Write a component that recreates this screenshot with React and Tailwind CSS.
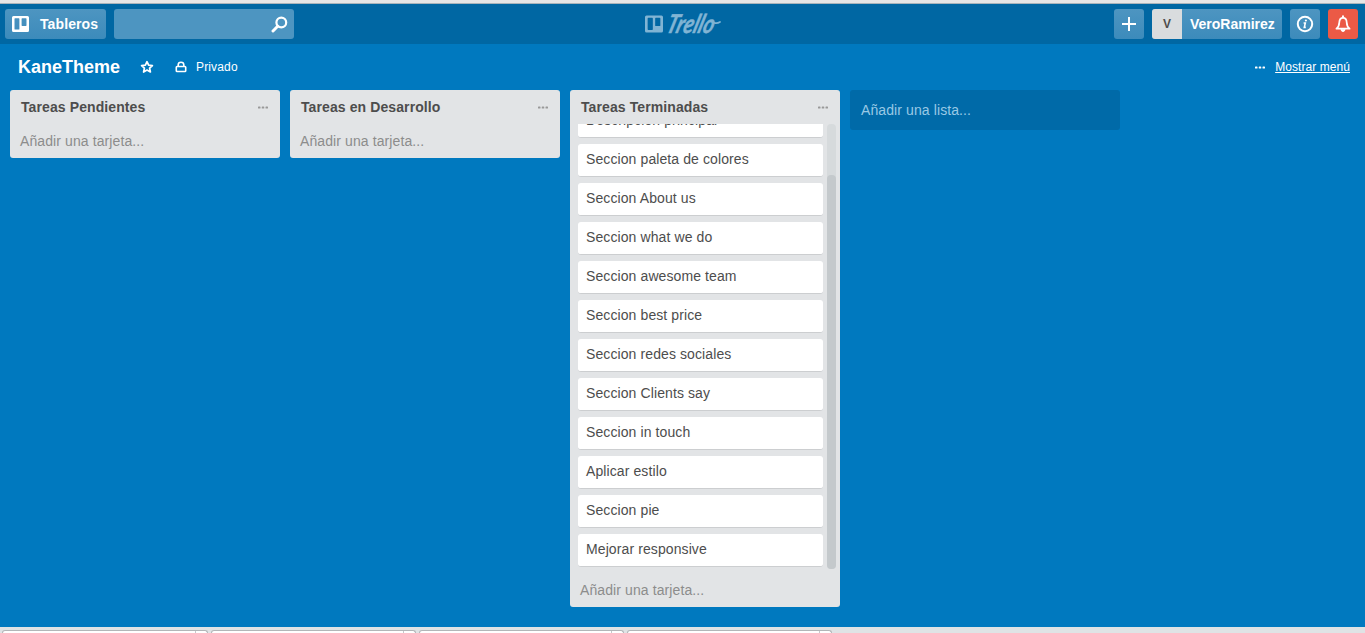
import React from "react";

const cards = [
  "Descripcion principal",
  "Seccion paleta de colores",
  "Seccion About us",
  "Seccion what we do",
  "Seccion awesome team",
  "Seccion best price",
  "Seccion redes sociales",
  "Seccion Clients say",
  "Seccion in touch",
  "Aplicar estilo",
  "Seccion pie",
  "Mejorar responsive",
];

const downloads = ["w-[192px]", "w-[191px]", "w-[191px]", "w-[191px]"];

function BoardIcon({ className }) {
  return (
    <svg viewBox="0 0 17 16" className={className} fill="currentColor">
      <path
        fillRule="evenodd"
        d="M1.500 0h14A1.500 1.500 0 0 1 17 1.500v13a1.500 1.500 0 0 1-1.500 1.500h-14A1.500 1.500 0 0 1 0 14.500v-13A1.500 1.500 0 0 1 1.500 0zM3.100 2.200a.6.6 0 0 0-.6.6v10.200a.6.6 0 0 0 .6.6h3.700a.6.6 0 0 0 .6-.6V2.800a.6.6 0 0 0-.6-.6zM10.200 2.200a.6.6 0 0 0-.6.6v6.500a.6.6 0 0 0 .6.6h3.700a.6.6 0 0 0 .6-.6V2.800a.6.6 0 0 0-.6-.6z"
      />
    </svg>
  );
}

function Dots({ className }) {
  return (
    <svg viewBox="0 0 10 3" className={className} fill="currentColor">
      <rect x="0" y="0.4" width="2.5" height="2.2" rx="0.6" />
      <rect x="3.75" y="0.4" width="2.5" height="2.2" rx="0.6" />
      <rect x="7.5" y="0.4" width="2.5" height="2.2" rx="0.6" />
    </svg>
  );
}

function ListHeader({ title }) {
  return (
    <div className="flex h-[34px] shrink-0 items-center justify-between pl-[11px] pr-3">
      <h2 className="text-sm font-bold tracking-[0.1px] text-[#4d4d4d]">{title}</h2>
      <Dots className="h-[3px] w-[10px] text-[#999]" />
    </div>
  );
}

function ShortList({ title }) {
  return (
    <section className="h-[68px] w-[270px] rounded-[3px] bg-[#e2e4e6]">
      <ListHeader title={title} />
      <p className="flex h-[34px] items-center pl-[10px] text-sm tracking-[0.1px] text-[#8c8c8c]">Añadir una tarjeta...</p>
    </section>
  );
}

export default function App() {
  return (
    <div className="flex h-[633px] w-[1365px] flex-col overflow-hidden bg-[#0079bf] font-['Liberation_Sans',Arial,sans-serif] text-sm text-white">
      <div className="h-1 shrink-0 border-b border-[#a9b4bb] bg-[#e6e6e6]" />
      <header className="grid h-10 shrink-0 grid-cols-[1fr_76px_1fr] items-center bg-[#0067a3] pl-[5px] pr-[7px]">
        <div className="flex gap-2">
          <button className="flex h-[30px] w-[101px] items-center rounded-[3px] bg-linear-to-b from-[#4d95c1] to-[#3c8bbb] pl-[7px] font-bold">
            <BoardIcon className="h-4 w-[17px]" />
            <span className="ml-[11px] tracking-[0.1px]">Tableros</span>
          </button>
          <div className="flex h-[30px] w-[180px] items-center justify-end rounded-[3px] bg-[#4d95c1] pr-[6px]">
            <svg viewBox="0 0 17 17" className="h-[17px] w-[17px]" fill="none" stroke="currentColor">
              <circle cx="10.3" cy="6.5" r="4.9" strokeWidth="2.2" />
              <path d="M6.7 10.3 2 15" strokeWidth="3" strokeLinecap="round" />
            </svg>
          </div>
        </div>
        <div className="flex items-center pl-px text-[#80b4d4]">
          <BoardIcon className="h-[18px] w-[18px] shrink-0" />
          <svg viewBox="0 0 58 28" className="h-7 w-[58px] shrink-0 overflow-visible" fill="currentColor">
            <text
              x="9"
              y="22.5"
              textLength="47"
              lengthAdjust="spacingAndGlyphs"
              transform="skewX(-17)"
              stroke="currentColor"
              strokeWidth="0.5"
              className="font-['Lato',sans-serif] text-[26px] font-bold italic"
            >
              Trello
            </text>
            <path d="M51.500 12.800q2.500 .8 5.500-.8" fill="none" stroke="currentColor" strokeWidth="1.8" strokeLinecap="round" />
          </svg>
        </div>
        <div className="flex justify-end gap-2">
          <button className="flex h-[30px] w-[30px] items-center justify-center rounded-[3px] bg-linear-to-b from-[#4d95c1] to-[#3c8bbb]">
            <svg viewBox="0 0 16 16" className="h-4 w-4" stroke="currentColor" strokeWidth="2">
              <path d="M8 1v14M1 8h14" />
            </svg>
          </button>
          <button className="flex h-[30px] w-[130px] items-center overflow-hidden rounded-[3px] bg-linear-to-b from-[#4d95c1] to-[#3c8bbb] font-bold">
            <span className="flex h-[30px] w-[30px] items-center justify-center bg-[#d9dcde] text-xs text-[#4d4d4d]">V</span>
            <span className="ml-2">VeroRamirez</span>
          </button>
          <button className="flex h-[30px] w-[30px] items-center justify-center rounded-[3px] bg-linear-to-b from-[#4d95c1] to-[#3c8bbb]">
            <svg viewBox="0 0 18 18" className="h-[18px] w-[18px]" fill="none" stroke="currentColor">
              <circle cx="9" cy="9" r="7.2" strokeWidth="2" />
              <path d="M7.6 8h1.7L8.300 12.400h1.500" strokeWidth="1.6" />
              <circle cx="9.9" cy="5.500" r="1.100" fill="currentColor" stroke="none" />
            </svg>
          </button>
          <button className="flex h-[30px] w-[30px] items-center justify-center rounded-[3px] bg-[#eb5a46]">
            <svg viewBox="0 0 16 18" className="h-[18px] w-4" fill="none" stroke="currentColor" strokeLinejoin="round" strokeLinecap="round">
              <path d="M8 2.800C5.300 2.800 4.400 5 4.300 7.400 4.200 10.300 3.300 12.300 1.400 13.700h13.200C12.700 12.300 11.800 10.300 11.700 7.400 11.600 5 10.700 2.800 8 2.800z" strokeWidth="1.7" />
              <path d="M8 1.200v1" strokeWidth="2" />
              <path d="M6 14.500a2 2 0 0 0 4 0z" fill="currentColor" strokeWidth="1" />
            </svg>
          </button>
        </div>
      </header>

      <div className="flex h-[46px] shrink-0 items-center pl-[18px] pr-[15px] text-xs">
        <h1 className="w-[102px] text-lg font-bold">KaneTheme</h1>
        <svg viewBox="0 0 14 14" className="ml-5 h-[14px] w-[14px]" fill="none" stroke="currentColor" strokeWidth="1.7" strokeLinejoin="round">
          <path d="m7 1.700 1.600 3.500 3.800.4-2.800 2.600.8 3.800L7 10.100 3.600 12l.8-3.800L1.600 5.600l3.800-.4z" />
        </svg>
        <svg viewBox="0 0 12 12" className="ml-[21px] h-3 w-3" fill="none" stroke="currentColor">
          <rect x="1.300" y="5.500" width="9.400" height="5" rx="0.8" strokeWidth="1.6" />
          <path d="M3.200 5.200V3.800a2.800 2.600 0 0 1 5.600 0v1.400" strokeWidth="1.6" />
        </svg>
        <span className="ml-[9px] tracking-[0.15px]">Privado</span>
        <Dots className="ml-auto h-[3px] w-[10px]" />
        <a href="#menu" className="ml-[10px] tracking-[0.07px] underline">Mostrar menú</a>
      </div>

      <main className="flex h-[537px] shrink-0 items-start gap-[10px] pl-[10px]">
        <ShortList title="Tareas Pendientes" />
        <ShortList title="Tareas en Desarrollo" />
        <section className="flex h-[517px] w-[270px] flex-col rounded-[3px] bg-[#e2e4e6]">
          <ListHeader title="Tareas Terminadas" />
          <div className="flex h-[445px] shrink-0 pl-2 pr-1">
            <div className="flex w-[245px] flex-col justify-end gap-[6px] overflow-hidden pb-[2px]">
              {cards.map((card) => (
                <div
                  key={card}
                  className="flex h-[33px] shrink-0 items-center rounded-[3px] border-b border-[#ccced0] bg-white pb-[2px] pl-2 tracking-[0.1px] text-[#4d4d4d]"
                >
                  {card}
                </div>
              ))}
            </div>
            <div className="ml-auto flex w-[9px] flex-col justify-end rounded bg-[#d6dadc]">
              <div className="h-[394px] rounded bg-[#c4c9cc]" />
            </div>
          </div>
          <p className="flex flex-1 items-center pl-[10px] pt-1 tracking-[0.1px] text-[#8c8c8c]">Añadir una tarjeta...</p>
        </section>
        <div className="flex h-10 w-[270px] items-center rounded-[3px] bg-[#006aa8] pl-[11px] tracking-[0.1px] text-[#99c9e5]">Añadir una lista...</div>
      </main>

      <footer className="flex h-[6px] shrink-0 items-end gap-[3px] bg-[#dfe3e5] pl-[2px]">
        {downloads.map((width, i) => (
          <div key={i} className="flex h-[3px] rounded-t-[3px] border-x border-t border-[#b2b6b8] bg-white">
            <div className={width} />
            <div className="w-3 border-l border-[#c5c8ca]" />
          </div>
        ))}
      </footer>
    </div>
  );
}
